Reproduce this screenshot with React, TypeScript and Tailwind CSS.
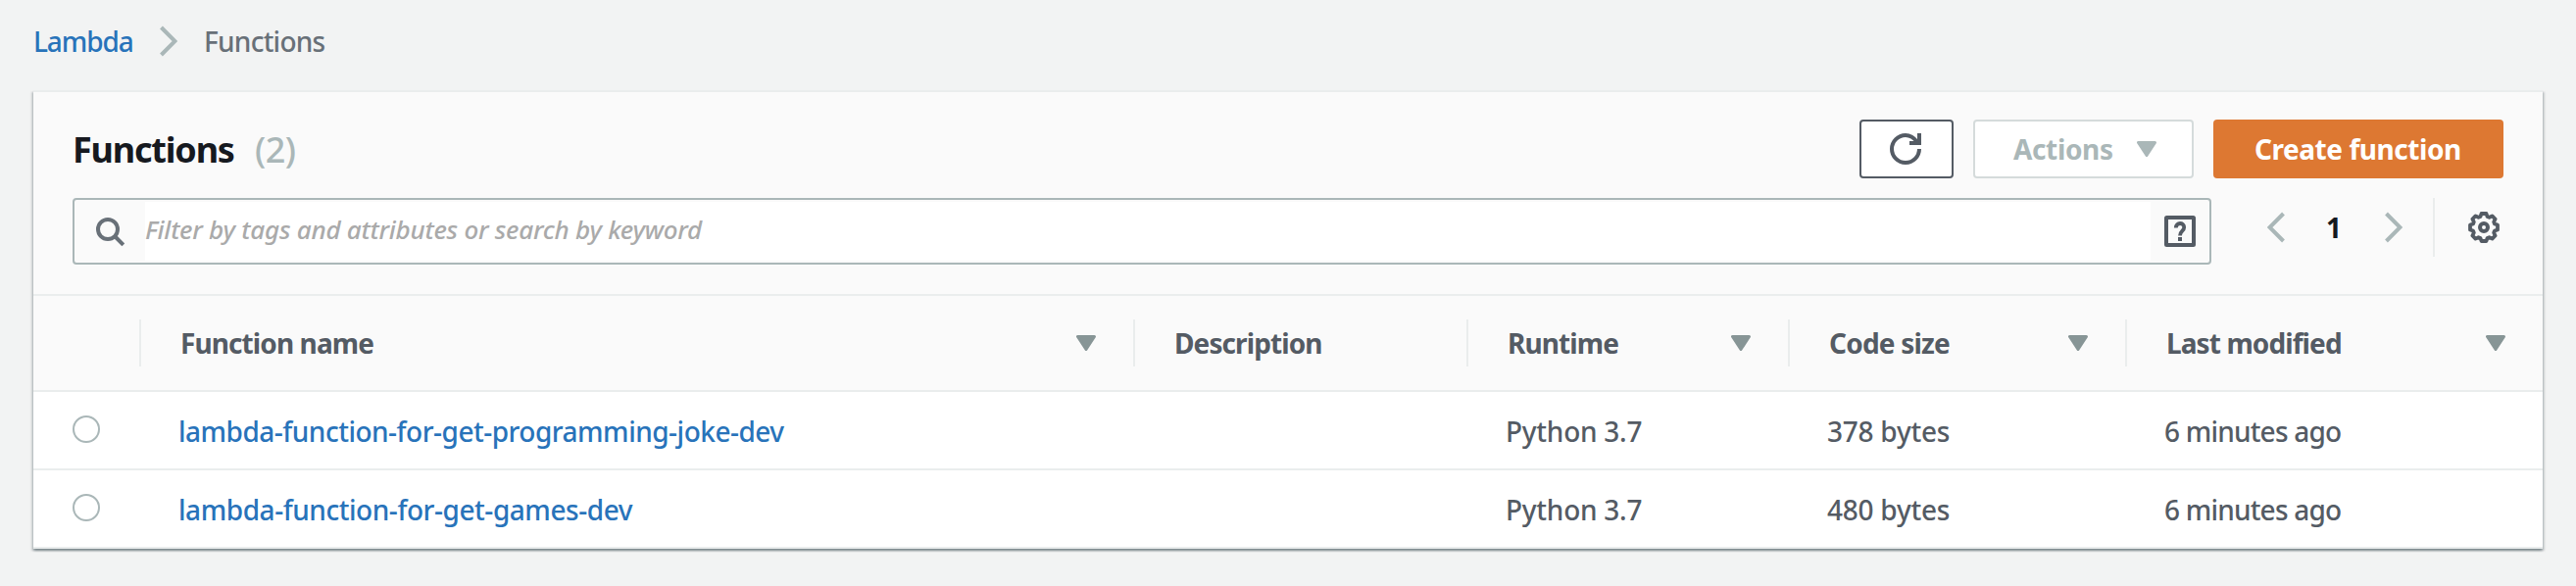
import React from "react";

const GRID = "grid grid-cols-[110px_1014px_340px_328px_344px_424px]";

function T({ children, className = "" }: { children: React.ReactNode; className?: string }) {
  return <span className={`whitespace-nowrap ${className}`}>{children}</span>;
}

function Triangle({ color }: { color: string }) {
  return (
    <svg width="20" height="16" viewBox="0 0 20 16" className="shrink-0">
      <path d="M1.5 1.5 H18.5 L10 14.5 Z" fill={color} stroke={color} strokeWidth="3" strokeLinejoin="round" />
    </svg>
  );
}

function Chevron({ left = false }: { left?: boolean }) {
  return (
    <svg width="18" height="32" viewBox="0 0 18 32" className="shrink-0">
      <path d={left ? "M16.5 2 L2.5 16 L16.5 30" : "M1.5 2 L15.5 16 L1.5 30"} fill="none" stroke="#aab7b8" strokeWidth="4" />
    </svg>
  );
}

const columns = [
  { title: "Function name", sort: true, cls: "tracking-[-0.9px]" },
  { title: "Description", sort: false, cls: "tracking-[-0.9px]" },
  { title: "Runtime", sort: true, cls: "tracking-[-0.9px]" },
  { title: "Code size", sort: true, cls: "tracking-[-0.8px]" },
  { title: "Last modified", sort: true, cls: "tracking-[-0.9px]" },
];

const rows = [
  { name: "lambda-function-for-get-programming-joke-dev", size: "378 bytes", cls: "tracking-[-0.5px]" },
  { name: "lambda-function-for-get-games-dev", size: "480 bytes", cls: "tracking-[-0.45px]" },
];

export default function App() {
  return (
    <div className="h-[598px] w-[2628px] overflow-hidden bg-[#f2f3f3] font-['Noto_Sans',sans-serif] text-[28px] leading-[40px] font-medium text-[#545b64]">
      <nav className="flex h-[92px] items-start pt-[22px] pl-[34px]">
        <T className="w-[129px] tracking-[-1.1px] text-[#2873ba]">Lambda</T>
        <div className="mt-[4px] w-[45px] [&>svg]:block"><Chevron /></div>
        <T className="tracking-[-0.75px] text-[#687078]">Functions</T>
      </nav>
      <main className="ml-[34px] flex h-[468px] w-[2560px] flex-col border-t-2 border-[#eaeded] bg-white shadow-[0_2px_2px_0_rgba(0,28,36,0.3),2px_2px_2px_0_rgba(0,28,36,0.15),-2px_2px_2px_0_rgba(0,28,36,0.15)]">
        <header className="h-[208px] border-b-2 border-[#eaeded] bg-[#fafafa] pt-[28px] pr-[40px] pl-[40px]">
          <div className="flex h-[60px] items-center">
            <T className="w-[186px] pt-[2px] text-[36px] font-bold tracking-[-1.2px] text-[#16191f]">Functions</T>
            <T className="pt-[2px] text-[36px] tracking-[-0.5px] text-[#aab7b8]">(2)</T>
            <div className="ml-auto flex gap-[20px] font-bold">
              <button className="flex h-[60px] w-[96px] items-center justify-center rounded-[4px] border-2 border-[#545b64] bg-white">
                <svg width="32" height="32" viewBox="0 0 32 32" className="-translate-x-px">
                  <path d="M30 16 A14 14 0 1 1 16 2 C21 2 25 5 28 9" fill="none" stroke="#545b64" strokeWidth="4" />
                  <path d="M30 0 V10 H20" fill="none" stroke="#545b64" strokeWidth="4" />
                </svg>
              </button>
              <button className="flex h-[60px] w-[225px] items-center rounded-[4px] border-2 border-[#d5dbdb] bg-white pl-[39px] text-[#aab7b8]">
                <T className="w-[126px] text-left tracking-[-0.35px]">Actions</T>
                <Triangle color="#aab7b8" />
              </button>
              <button className="flex h-[60px] w-[296px] items-center rounded-[4px] bg-[#dd7832] pl-[42px] text-white">
                <T className="tracking-[-0.45px]">Create function</T>
              </button>
            </div>
          </div>
          <div className="mt-[20px] flex">
            <div className="flex h-[68px] w-[2182px] items-center rounded-[4px] border-2 border-[#aab7b8]">
              <div className="w-[72px] pl-[22px]">
                <svg width="32" height="32" viewBox="0 0 32 32">
                  <circle cx="12" cy="14" r="10" fill="none" stroke="#687078" strokeWidth="4" />
                  <path d="M19 21 L27.8 29.8" stroke="#687078" strokeWidth="4" />
                </svg>
              </div>
              <div className="flex h-[60px] w-[2046px] items-center bg-white pb-[4px]">
                <T className="text-[26px] tracking-[-0.25px] text-[#aaaaaa] italic">Filter by tags and attributes or search by keyword</T>
              </div>
              <svg width="32" height="32" viewBox="0 0 32 32" className="ml-[14px]">
                <rect x="2" y="2" width="28" height="28" rx="0.5" fill="none" stroke="#545b64" strokeWidth="4" />
                <path d="M11.8 12.5 C11.8 6.6 20.2 6.6 20.2 12 C20.2 15.8 16 15.5 16 20.5" fill="none" stroke="#545b64" strokeWidth="3.8" />
                <rect x="14" y="22" width="4" height="4" fill="#545b64" />
              </svg>
            </div>
            <div className="flex h-[60px] flex-1 items-center pl-[57px]">
              <Chevron left />
              <T className="w-[102px] pl-[42px] font-bold text-[#16191f]">1</T>
              <Chevron />
              <div className="ml-[31px] h-[60px] w-[2px] bg-[#eaeded]" />
              <svg width="32" height="32" viewBox="0 0 32 32" className="ml-[34px]">
                <path d="M13.5 2 H18.5 L19.5 5 L21.5 5.8 L24.5 4.4 L27.6 7.5 L26.2 10.5 L27 12.5 L30 13.5 V18.5 L27 19.5 L26.2 21.5 L27.6 24.5 L24.5 27.6 L21.5 26.2 L19.5 27 L18.5 30 H13.5 L12.5 27 L10.5 26.2 L7.5 27.6 L4.4 24.5 L5.8 21.5 L5 19.5 L2 18.5 V13.5 L5 12.5 L5.8 10.5 L4.4 7.5 L7.5 4.4 L10.5 5.8 L12.5 5 Z" fill="none" stroke="#545b64" strokeWidth="3.8" strokeLinejoin="round" />
                <circle cx="16" cy="16" r="4" fill="none" stroke="#545b64" strokeWidth="4" />
              </svg>
            </div>
          </div>
        </header>
        <div className={`${GRID} h-[98px] items-center border-b-2 border-[#eaeded] bg-[#fafafa] font-bold`}>
          <div className="h-[48px] border-r-2 border-[#eaeded]" />
          {columns.map((c, i) => (
            <div key={c.title} className={`flex h-[48px] items-center justify-between pr-[38px] pl-[40px] ${i < 4 ? "border-r-2 border-[#eaeded]" : ""}`}>
              <T className={c.cls}>{c.title}</T>
              {c.sort && <Triangle color="#879596" />}
            </div>
          ))}
        </div>
        {rows.map((r) => (
          <div key={r.name} className={`${GRID} h-[80px] items-center border-b-2 border-[#eaeded]`}>
            <div className="pl-[40px]">
              <div className="mb-[2px] h-[28px] w-[28px] rounded-full border-2 border-[#aab7b8] bg-white" />
            </div>
            <T className={`pt-px pl-[38px] text-[#2873ba] ${r.cls}`}>{r.name}</T>
            <span />
            <T className="pt-px pl-[38px] tracking-[-0.25px]">Python 3.7</T>
            <T className="pt-px pl-[38px] tracking-[-0.25px]">{r.size}</T>
            <T className="pt-px pl-[38px] tracking-[-0.8px]">6 minutes ago</T>
          </div>
        ))}
      </main>
    </div>
  );
}
